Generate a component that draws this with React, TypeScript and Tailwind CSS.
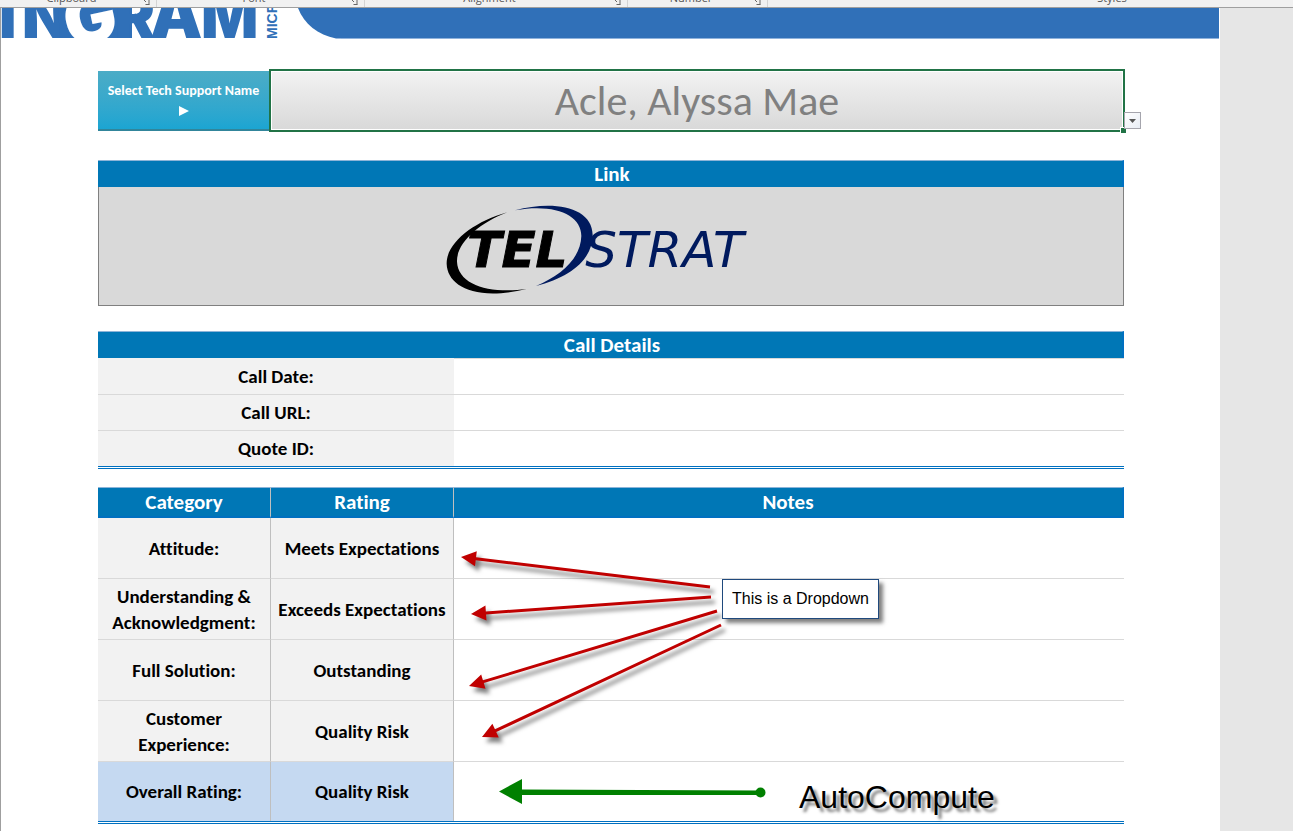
import type { ReactNode } from "react";

const ratings = ["Outstanding", "Exceeds Expectations", "Meets Expectations", "Quality Risk"];

const categories = [
  { label: "Attitude:", rating: "Meets Expectations" },
  { label: "Understanding & Acknowledgment:", rating: "Exceeds Expectations" },
  { label: "Full Solution:", rating: "Outstanding" },
  { label: "Customer Experience:", rating: "Quality Risk" },
];

const details = [
  { id: "call-date", label: "Call Date:" },
  { id: "call-url", label: "Call URL:" },
  { id: "quote-id", label: "Quote ID:" },
];

const arrows = [
  { tip: [461, 557], tail: [710, 587] },
  { tip: [471, 614], tail: [711, 597] },
  { tip: [469, 686], tail: [717, 611] },
  { tip: [482, 737], tail: [721, 625] },
];

function RibbonGroup({ label, className }: { label: string; className: string }) {
  return (
    <div className={`flex h-full items-end border-r border-[#d4d4d4] ${className}`}>
      <span className="flex-1 text-center leading-[18px]">{label}</span>
      <svg className="mr-1 h-[7px] w-[9px] shrink-0" viewBox="0 0 9 7" aria-hidden="true">
        <path d="M1 0L3 2M6 0V4.500M2.500 4.500H6.500" fill="none" stroke="#666" strokeWidth="1" />
      </svg>
    </div>
  );
}

function Ribbon() {
  return (
    <header className="flex h-2 overflow-hidden border-b border-[#9f9f9f] bg-[#f1f1f1] font-['Open_Sans',sans-serif] text-[11px] text-[#555]">
      <RibbonGroup label="Clipboard" className="w-[157px]" />
      <RibbonGroup label="Font" className="w-[208px]" />
      <RibbonGroup label="Alignment" className="w-[263px]" />
      <RibbonGroup label="Number" className="w-[140px]" />
      <div className="ml-auto flex h-full w-[362px] items-end justify-center">
        <span className="leading-[18px]">Styles</span>
      </div>
    </header>
  );
}

function Banner() {
  return (
    <div className="flex h-[31px] pr-px">
      <svg className="h-[31px] w-[340px] shrink-0" viewBox="1 8 340 31" role="img" aria-label="Ingram Micro">
        <g fill="#3070b8" fontFamily="Inter, sans-serif" fontWeight="900" fontSize="60">
          <text x="-1" y="38">I</text>
          <text x="22" y="38">N</text>
          <path d="M58 8H132V38H82L60 38Z" />
          <text x="115" y="38">R</text>
          <text x="150" y="38" fontSize="66">A</text>
          <text x="201" y="38">M</text>
          <text x="64" y="43" fill="#fff" fontSize="70" transform="rotate(-12 90 20)">G</text>
        </g>
        <text
          transform="translate(277 39) rotate(-90)"
          fill="#3070b8"
          fontFamily="Liberation Sans, Arial, sans-serif"
          fontWeight="700"
          fontSize="14"
        >
          MICRO
        </text>
        <path d="M298 8C304 24 318 35 336 38.500H342V8Z" fill="#3070b8" />
      </svg>
      <div className="flex-1 border-b border-[#8fb2dc] bg-[#3070b8]" />
    </div>
  );
}

function TelStratLogo() {
  return (
    <svg className="h-[118px] w-[362px]" viewBox="0 -9 1086 354" role="img" aria-label="TelStrat">
      <path
        d="M232 67C130 95 48 160 50 222C52 285 130 335 290 297C180 312 84 285 81 215C79 160 145 100 232 67Z"
        fill="#000"
      />
      <path
        d="M255 61C370 30 487 50 488 135C487 210 420 262 318 288C395 255 452 205 454 138C454 75 375 40 255 61Z"
        fill="#001a5e"
      />
      <g fontFamily="DejaVu Sans, sans-serif" fontStyle="oblique">
        <text x="112" y="231" fontSize="150" fontWeight="700" stroke="#000" strokeWidth="3">TEL</text>
        <text x="466" y="231" fontSize="150" fill="#001a5e">STRAT</text>
      </g>
    </svg>
  );
}

function SectionBar({ children }: { children: ReactNode }) {
  return (
    <h2 className="h-[27px] border-t border-r-2 border-t-[#8db4d8] border-r-[#0070c0] bg-[#0077b6] pl-1 text-center text-[21px] leading-[27px] font-bold text-white">
      {children}
    </h2>
  );
}

function RatingSelect({ label, value }: { label: string; value: string }) {
  return (
    <select
      aria-label={`${label} rating`}
      defaultValue={value}
      className="w-full appearance-none bg-transparent text-center font-bold outline-none"
    >
      {ratings.map((r) => (
        <option key={r}>{r}</option>
      ))}
    </select>
  );
}

function Arrow({ tip, tail }: { tip: number[]; tail: number[] }) {
  const dx = tail[0] - tip[0];
  const dy = tail[1] - tip[1];
  const angle = (Math.atan2(dy, dx) * 180) / Math.PI;
  const length = Math.hypot(dx, dy);
  return (
    <g transform={`translate(${tip[0]} ${tip[1]}) rotate(${angle})`} fill="#c00000">
      <path d={`M0 0L15 -7.500V-1.500H${length}V1.500H15V7.500Z`} />
    </g>
  );
}

function Annotations() {
  return (
    <>
      <svg
        className="pointer-events-none absolute top-0 left-0 h-[337px] w-[1026px]"
        viewBox="98 487 1026 337"
        aria-hidden="true"
      >
        <g className="[filter:drop-shadow(4px_5px_2px_rgba(0,0,0,0.5))]">
          {arrows.map((a) => (
            <Arrow key={a.tip.join()} tip={a.tip} tail={a.tail} />
          ))}
        </g>
        <g fill="#008000">
          <path d="M499 791.500L522 779V789.500L760 790.500V795H522V804Z" />
          <circle cx="760.500" cy="792.500" r="5" />
        </g>
      </svg>
      <div className="absolute top-[92px] left-[624px] flex h-10 w-[157px] items-center justify-center border border-[#1f497d] bg-white font-['Liberation_Sans',Arial,sans-serif] text-base text-black shadow-[4px_4px_4px_rgba(0,0,0,0.5)]">
        This is a Dropdown
      </div>
      <div className="absolute top-[292px] left-[701px] font-['Liberation_Sans',Arial,sans-serif] text-[32px] leading-9 text-black [text-shadow:4px_4px_3px_rgba(0,0,0,0.5)]">
        AutoCompute
      </div>
    </>
  );
}

export default function App() {
  return (
    <div className="flex min-h-screen flex-col bg-white font-['Carlito','Calibri','Lato',sans-serif] text-black [font-variant-ligatures:none]">
      <Ribbon />
      <div className="flex flex-1">
        <main className="min-w-0 flex-1 border-l border-[#9f9f9f]">
          <Banner />
          <div className="pt-[30px] pr-24 pl-[97px]">
            <div className="relative -mr-px flex h-[63px]">
              <label
                htmlFor="tech-name"
                className="mt-[2px] mb-px flex w-[171px] flex-col items-center justify-center border-b-2 border-[#31859b] bg-linear-to-b from-[#4bacc6] to-[#1ba5d2] pt-[2px] text-[14px] leading-5 font-bold text-white"
              >
                Select Tech Support Name
                <svg className="h-5 w-[10px]" viewBox="0 0 10 20" aria-hidden="true">
                  <path d="M0 5L10 10L0 15Z" fill="#fff" />
                </svg>
              </label>
              <div className="flex-1 border-2 border-[#217346] bg-white p-px">
                <select
                  id="tech-name"
                  className="h-full w-full appearance-none bg-linear-to-b from-[#f2f2f2] to-[#d9d9d9] text-center text-[42px] leading-[56px] text-[#808080] outline-none"
                >
                  <option>Acle, Alyssa Mae</option>
                </select>
              </div>
              <span className="absolute -right-px -bottom-px size-[6px] border-t border-l border-white bg-[#217346]" />
              <button
                type="button"
                aria-label="Open name list"
                className="absolute right-[-16px] bottom-[3px] flex size-[17px] items-center justify-center border border-[#a5a5ad] bg-linear-to-br from-white to-[#e8edf5]"
              >
                <svg className="h-1 w-[7px]" viewBox="0 0 7 4" aria-hidden="true">
                  <path d="M0 0H7L3.500 4Z" fill="#555" />
                </svg>
              </button>
            </div>

            <section className="mt-7">
              <SectionBar>Link</SectionBar>
              <div className="flex h-[119px] justify-center border-r border-b border-l border-[#808080] bg-[#d9d9d9]">
                <a href="#telstrat">
                  <TelStratLogo />
                </a>
              </div>
            </section>

            <section className="mt-[25px]">
              <SectionBar>Call Details</SectionBar>
              <table className="w-full table-fixed border-separate border-spacing-0 border-b-[3px] border-double border-[#0070c0] text-[19px]">
                <colgroup>
                  <col className="w-[356px]" />
                  <col />
                </colgroup>
                <tbody>
                  {details.map((d, i) => (
                    <tr key={d.id}>
                      <th
                        scope="row"
                        className={`h-9 bg-[#f2f2f2] px-0 pt-[2px] pb-0 font-bold ${i > 0 ? "border-t border-[#d9d9d9]" : ""}`}
                      >
                        <label htmlFor={d.id}>{d.label}</label>
                      </th>
                      <td className="border-t border-[#d9d9d9] p-0">
                        <input id={d.id} className="block h-[34px] w-full bg-transparent px-2 outline-none" />
                      </td>
                    </tr>
                  ))}
                </tbody>
              </table>
            </section>

            <section className="relative mt-[18px]">
              <table className="w-full table-fixed border-separate border-spacing-0 border-b-[3px] border-double border-[#0070c0] text-[19px] leading-[26px]">
                <colgroup>
                  <col className="w-[173px]" />
                  <col className="w-[183px]" />
                  <col />
                </colgroup>
                <thead>
                  <tr className="bg-[#0077b6] text-[21px] text-white">
                    <th className="h-[31px] border-t border-r border-b-2 border-t-[#8db4d8] border-r-[#bfbfbf] border-b-[#0070c0] p-0">Category</th>
                    <th className="border-t border-r border-b-2 border-t-[#8db4d8] border-r-[#bfbfbf] border-b-[#0070c0] p-0">Rating</th>
                    <th className="border-t border-r-2 border-b-2 border-t-[#8db4d8] border-r-[#0070c0] border-b-[#0070c0] p-0">Notes</th>
                  </tr>
                </thead>
                <tbody>
                  {categories.map((c) => (
                    <tr key={c.label}>
                      <th scope="row" className="h-[61px] border-r border-b border-r-[#bfbfbf] border-b-[#d9d9d9] bg-[#f2f2f2] px-3 pt-px pb-0 font-bold">
                        {c.label}
                      </th>
                      <td className="border-r border-b border-r-[#bfbfbf] border-b-[#d9d9d9] bg-[#f2f2f2] px-0 pt-[2px] pb-0">
                        <RatingSelect label={c.label} value={c.rating} />
                      </td>
                      <td className="border-b border-[#d9d9d9] p-0">
                        <input aria-label={`${c.label} notes`} className="block h-[58px] w-full bg-transparent px-2 outline-none" />
                      </td>
                    </tr>
                  ))}
                  <tr>
                    <th scope="row" className="h-[59px] border-r border-[#bfbfbf] bg-[#c5d9f1] p-0 font-bold">
                      Overall Rating:
                    </th>
                    <td className="border-r border-[#bfbfbf] bg-[#c5d9f1] p-0 text-center font-bold">Quality Risk</td>
                    <td className="p-0" />
                  </tr>
                </tbody>
              </table>
              <Annotations />
            </section>
          </div>
        </main>
        <aside className="w-[73px] shrink-0 bg-[#e6e6e6]" />
      </div>
    </div>
  );
}
